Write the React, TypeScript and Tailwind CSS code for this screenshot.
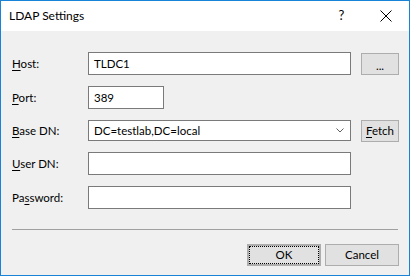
import React from 'react';

const font = { fontFamily: 'Lato, "Noto Sans", sans-serif' };

const Label: React.FC<{ pre?: string; u: string; post: string }> = ({ pre, u, post }) => (
  <span className="w-[76px] shrink-0 text-[11.5px] text-black">
    {pre}
    <u className="underline-offset-2">{u}</u>
    {post}
  </span>
);

const Field: React.FC<{ value?: string; w?: string }> = ({ value, w = 'w-[263px]' }) => (
  <div className={`${w} h-[23px] border border-[#7a7a7a] bg-white flex items-center px-[5px] text-[11.5px] text-black`}>
    {value}
  </div>
);

const Btn: React.FC<{ children: React.ReactNode; className?: string }> = ({ children, className = '' }) => (
  <div
    className={`h-[22px] bg-[#e1e1e1] border border-[#adadad] flex items-center justify-center text-[11.5px] text-black ${className}`}
  >
    {children}
  </div>
);

export default function App() {
  return (
    <div className="w-[410px] h-[276px] border border-[#1883d7] flex flex-col bg-[#f0f0f0]" style={font}>
      {/* title bar */}
      <div className="h-[30px] bg-white flex items-center shrink-0">
        <span className="pl-[8px] text-[12px] text-black flex-1">LDAP Settings</span>
        <span className="w-[45px] text-center text-[13px] text-black">?</span>
        <div className="w-[45px] flex justify-center pr-[2px]">
          <svg width="12" height="12" viewBox="0 0 12 12">
            <path d="M0.5 0.5 L11.5 11.5 M11.5 0.5 L0.5 11.5" stroke="#000" strokeWidth="1" />
          </svg>
        </div>
      </div>

      <div className="flex-1 flex flex-col pt-[21px] pl-[11px] pr-[10px]">
        <div className="flex items-center">
          <Label u="H" post="ost:" />
          <Field value="TLDC1" />
          <Btn className="ml-[10px] w-[38px] mt-[1px] pt-[3px]">...</Btn>
        </div>

        <div className="flex items-center mt-[11px]">
          <Label u="P" post="ort:" />
          <Field value="389" w="w-[76px]" />
        </div>

        <div className="flex items-center mt-[10px]">
          <Label u="B" post="ase DN:" />
          <div className="w-[263px] h-[21px] border border-[#7a7a7a] bg-white flex items-center pl-[5px] pr-[6px] text-[11.5px] text-black">
            <span className="flex-1">DC=testlab,DC=local</span>
            <svg width="8" height="5" viewBox="0 0 8 5">
              <path d="M0.5 0.5 L4 4 L7.5 0.5" stroke="#606060" strokeWidth="1" fill="none" />
            </svg>
          </div>
          <Btn className="ml-[10px] w-[38px] h-[21px] mt-[1px]">
            <span>
              <u className="underline-offset-2">F</u>etch
            </span>
          </Btn>
        </div>

        <div className="flex items-center mt-[10px]">
          <Label u="U" post="ser DN:" />
          <Field />
        </div>

        <div className="flex items-center mt-[11px]">
          <Label pre="Pa" u="s" post="sword:" />
          <Field />
        </div>

        <div className="mt-[20px] mr-[1px] h-px bg-[#a0a0a0]" />

        <div className="flex justify-end gap-[4px] mt-[14px]">
          <Btn className="w-[74px] border-2 border-[#0078d7] outline-1 outline-dotted outline-black outline-offset-[-3px]">
            OK
          </Btn>
          <Btn className="w-[74px]">Cancel</Btn>
        </div>
      </div>
    </div>
  );
}
